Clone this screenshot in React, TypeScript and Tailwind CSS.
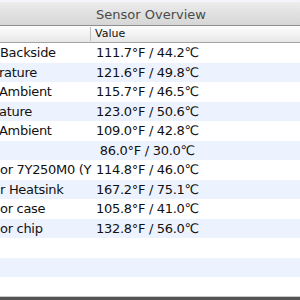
const rows: { name: string; shift: string; value: string }[] = [
  { name: "Backside", shift: "ml-0", value: "111.7°F / 44.2℃" },
  { name: "rature", shift: "-ml-[1px]", value: "121.6°F / 49.8℃" },
  { name: "Ambient", shift: "-ml-[1px]", value: "115.7°F / 46.5℃" },
  { name: "ature", shift: "-ml-[1px]", value: "123.0°F / 50.6℃" },
  { name: "Ambient", shift: "-ml-[1px]", value: "109.0°F / 42.8℃" },
  { name: "", shift: "ml-0", value: " 86.0°F / 30.0℃" },
  { name: "or 7Y250M0 (Y", shift: "ml-0", value: "114.8°F / 46.0℃" },
  { name: "r Heatsink", shift: "ml-0", value: "167.2°F / 75.1℃" },
  { name: "or case", shift: "ml-0", value: "105.8°F / 41.0℃" },
  { name: "or chip", shift: "ml-0", value: "132.8°F / 56.0℃" },
  { name: "", shift: "ml-0", value: "" },
  { name: "", shift: "ml-0", value: "" },
  { name: "", shift: "ml-0", value: "" },
];

export default function App() {
  return (
    <div className="flex h-[300px] w-[300px] flex-col overflow-hidden bg-white font-['DejaVu_Sans',sans-serif] text-[#111]">
      {/* title bar */}
      <div className="h-[2px] bg-[#f4f4fb]" />
      <div className="flex h-[24px] items-center justify-center border-b border-[#8e8e8e] bg-gradient-to-b from-[#ececec] to-[#d6d6d6] pt-[2px]">
        <span className="pl-[2px] text-[13px] text-[#4a4a4a]">Sensor Overview</span>
      </div>

      {/* column header */}
      <div className="flex h-[17px] border-b border-[#a3a3a3] bg-gradient-to-b from-[#fdfdfd] via-[#f3f3f3] to-[#e6e6e6] text-[11px]">
        <div className="my-[1px] w-[91px] border-r border-[#bdbdbd]" />
        <div className="flex items-center pl-[4px] pt-[1px]">Value</div>
      </div>

      {/* rows */}
      <div className="flex-1 overflow-hidden">
        {rows.map((row, i) => (
          <div
            key={i}
            className={`flex h-[19.5px] items-center text-[13px] tracking-[-0.3px] ${i % 2 === 1 ? "bg-[#edf3fe]" : "bg-white"}`}
          >
            <div className="w-[92px] overflow-hidden whitespace-nowrap">
              <span className={`block ${row.shift}`}>{row.name}</span>
            </div>
            <div className="whitespace-pre pl-[4px]">{row.value}</div>
          </div>
        ))}
      </div>

      {/* bottom edge */}
      <div className="h-[1px] bg-[#c9c9c9]" />
      <div className="h-[3px] bg-[#555]" />
    </div>
  );
}
